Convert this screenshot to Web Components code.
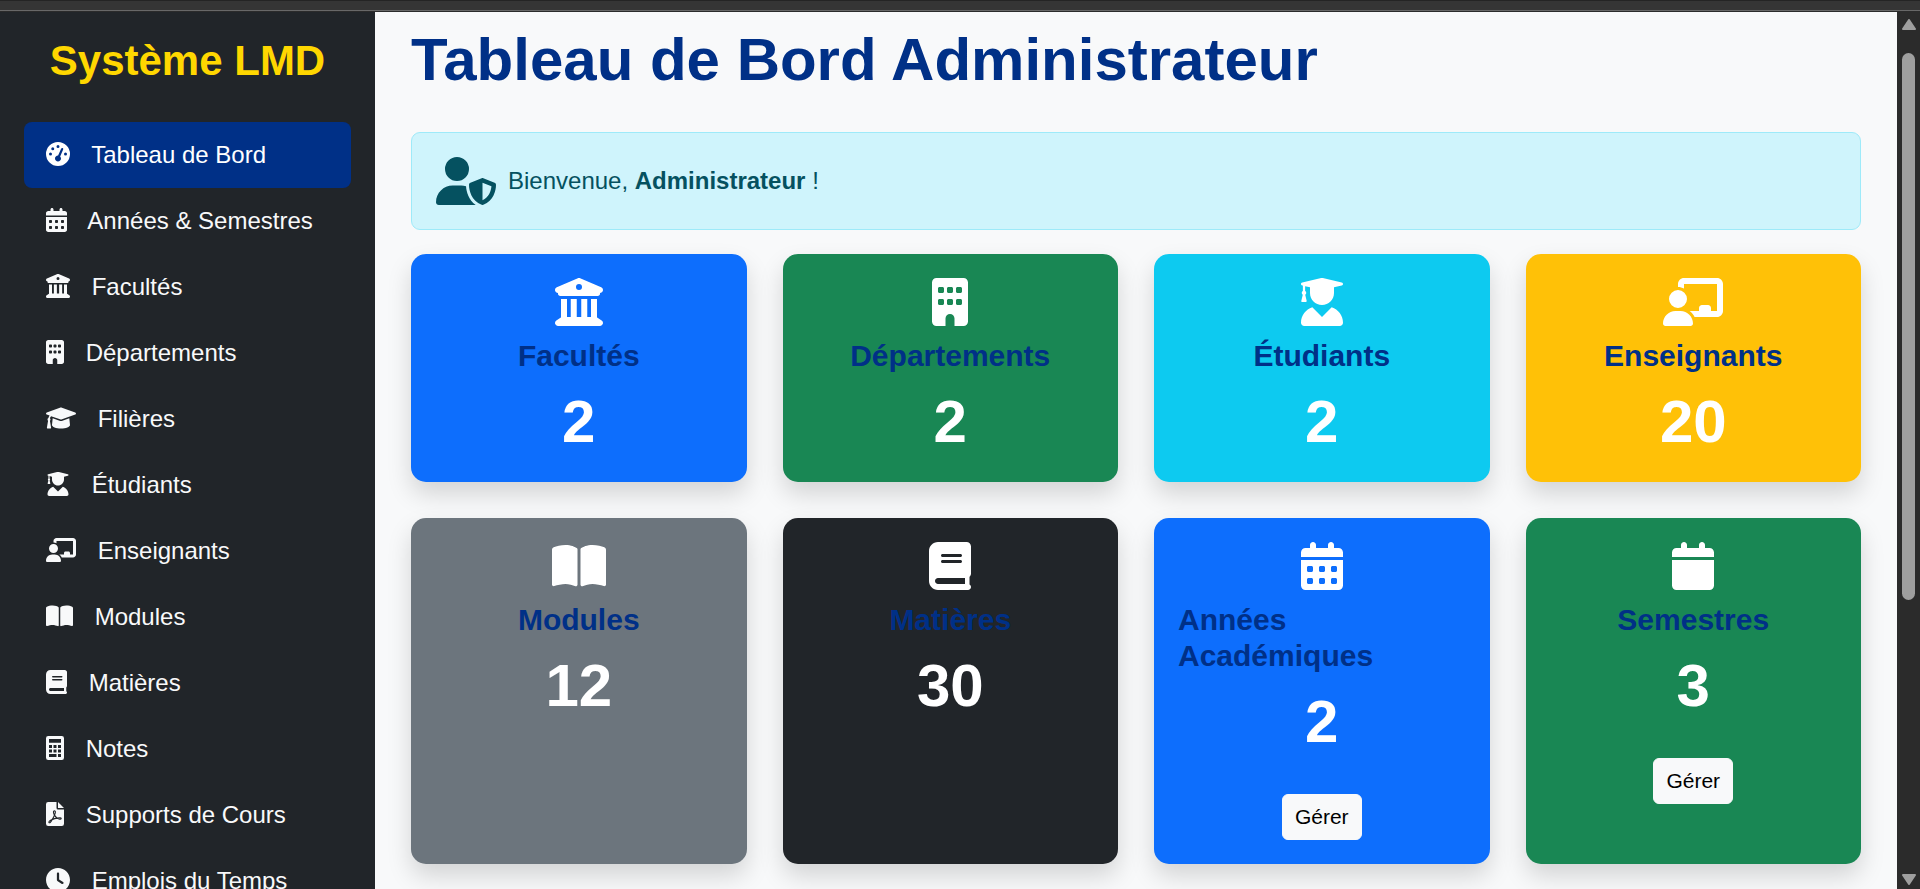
<!DOCTYPE html>
<html lang="fr">
<head>
<meta charset="utf-8">
<meta name="viewport" content="width=device-width, initial-scale=1">
<title>Tableau de Bord Administrateur</title>
<style>
  html, body { margin: 0; height: 100%; }
  body {
    overflow: hidden;
    background: #f8f9fa;
    color: #212529;
    font: 24px/36px "Liberation Sans", Arial, sans-serif;
    --navy: #003087;
    --dark: #212529;
  }
</style>
</head>
<body>
<app-shell>
  <side-bar slot="side" heading="Système LMD">
    <nav-item icon="gauge" active>Tableau de Bord</nav-item>
    <nav-item icon="calendar-days">Années &amp; Semestres</nav-item>
    <nav-item icon="university">Facultés</nav-item>
    <nav-item icon="building">Départements</nav-item>
    <nav-item icon="graduation-cap">Filières</nav-item>
    <nav-item icon="user-graduate">Étudiants</nav-item>
    <nav-item icon="teacher">Enseignants</nav-item>
    <nav-item icon="book-open">Modules</nav-item>
    <nav-item icon="book">Matières</nav-item>
    <nav-item icon="calculator">Notes</nav-item>
    <nav-item icon="file-pdf">Supports de Cours</nav-item>
    <nav-item icon="clock">Emplois du Temps</nav-item>
  </side-bar>

  <page-heading>Tableau de Bord Administrateur</page-heading>
  <welcome-alert icon="user-shield">Bienvenue, <strong>Administrateur</strong> !</welcome-alert>
  <card-grid>
    <stat-card icon="university" label="Facultés" value="2" tone="primary"></stat-card>
    <stat-card icon="building" label="Départements" value="2" tone="success"></stat-card>
    <stat-card icon="user-graduate" label="Étudiants" value="2" tone="info"></stat-card>
    <stat-card icon="teacher" label="Enseignants" value="20" tone="warning"></stat-card>
    <stat-card icon="book-open" label="Modules" value="12" tone="secondary"></stat-card>
    <stat-card icon="book" label="Matières" value="30" tone="dark"></stat-card>
    <stat-card icon="calendar-days" label="Années Académiques" value="2" tone="primary"><action-button>Gérer</action-button></stat-card>
    <stat-card icon="calendar" label="Semestres" value="3" tone="success"><action-button>Gérer</action-button></stat-card>
  </card-grid>

  <scroll-rail slot="rail"></scroll-rail>
</app-shell>

<script>
const CAL_TOP = 'M128 0c17.7 0 32 14.3 32 32V64H288V32c0-17.7 14.3-32 32-32s32 14.3 32 32V64h48c26.5 0 48 21.5 48 48v48H0V112C0 85.5 21.5 64 48 64H96V32c0-17.7 14.3-32 32-32zM0 192H448V464c0 26.5-21.5 48-48 48H48c-26.5 0-48-21.5-48-48V192z';
const ICONS = {
  'gauge': [512, '<path d="M0 256a256 256 0 1 1 512 0A256 256 0 1 1 0 256zM288 96a32 32 0 1 0 -64 0 32 32 0 1 0 64 0zM256 416c35.3 0 64-28.7 64-64c0-17.4-6.9-33.1-18.1-44.6L366 161.7c5.3-12.1-.2-26.3-12.3-31.6s-26.3 .2-31.6 12.3L257.9 288c-.6 0-1.3 0-1.9 0c-35.3 0-64 28.7-64 64s28.7 64 64 64zM176 144a32 32 0 1 0 -64 0 32 32 0 1 0 64 0zM96 288a32 32 0 1 0 0-64 32 32 0 1 0 0 64zm352-32a32 32 0 1 0 -64 0 32 32 0 1 0 64 0z"/>'],
  'calendar': [448, `<path d="${CAL_TOP}"/>`],
  'calendar-days': [448, `<path fill-rule="evenodd" d="${CAL_TOP}M64 272v32c0 8.8 7.2 16 16 16h32c8.8 0 16-7.2 16-16V272c0-8.8-7.2-16-16-16H80c-8.8 0-16 7.2-16 16zm128 0v32c0 8.8 7.2 16 16 16h32c8.8 0 16-7.2 16-16V272c0-8.8-7.2-16-16-16H208c-8.8 0-16 7.2-16 16zm144-16c-8.8 0-16 7.2-16 16v32c0 8.8 7.2 16 16 16h32c8.8 0 16-7.2 16-16V272c0-8.8-7.2-16-16-16H336zM64 400v32c0 8.8 7.2 16 16 16h32c8.8 0 16-7.2 16-16V400c0-8.8-7.2-16-16-16H80c-8.8 0-16 7.2-16 16zm144-16c-8.8 0-16 7.2-16 16v32c0 8.8 7.2 16 16 16h32c8.8 0 16-7.2 16-16V400c0-8.8-7.2-16-16-16H208zm112 16v32c0 8.8 7.2 16 16 16h32c8.8 0 16-7.2 16-16V400c0-8.8-7.2-16-16-16H336c-8.8 0-16 7.2-16 16z"/>`],
  'university': [512, '<path fill-rule="evenodd" d="M243.4 2.6l-224 96c-14 6-21.8 21-18.7 35.8S16.8 160 32 160v8c0 13.3 10.7 24 24 24H456c13.3 0 24-10.7 24-24v-8c15.2 0 28.3-10.7 31.3-25.6s-4.8-29.9-18.7-35.8l-224-96c-8-3.4-17.2-3.4-25.2 0zM128 224H64V420.3c-.6 .3-1.2 .7-1.8 1.1l-48 32c-11.7 7.8-17 22.4-12.9 35.9S17.9 512 32 512H480c14.1 0 26.5-9.2 30.6-22.7s-1.1-28.1-12.9-35.9l-48-32c-.6-.4-1.2-.7-1.8-1.1V224H384V416H344V224H280V416H232V224H168V416H128V224zM256 64a32 32 0 1 1 0 64 32 32 0 1 1 0-64z"/>'],
  'building': [384, '<path fill-rule="evenodd" d="M48 0C21.5 0 0 21.5 0 48V464c0 26.5 21.5 48 48 48h96V432c0-26.5 21.5-48 48-48s48 21.5 48 48v80h96c26.5 0 48-21.5 48-48V48c0-26.5-21.5-48-48-48H48zM64 240c0-8.8 7.2-16 16-16h32c8.8 0 16 7.2 16 16v32c0 8.8-7.2 16-16 16H80c-8.8 0-16-7.2-16-16V240zm112-16h32c8.8 0 16 7.2 16 16v32c0 8.8-7.2 16-16 16H176c-8.8 0-16-7.2-16-16V240c0-8.8 7.2-16 16-16zm80 16c0-8.8 7.2-16 16-16h32c8.8 0 16 7.2 16 16v32c0 8.8-7.2 16-16 16H272c-8.8 0-16-7.2-16-16V240zM80 96h32c8.8 0 16 7.2 16 16v32c0 8.8-7.2 16-16 16H80c-8.8 0-16-7.2-16-16V112c0-8.8 7.2-16 16-16zm80 16c0-8.8 7.2-16 16-16h32c8.8 0 16 7.2 16 16v32c0 8.8-7.2 16-16 16H176c-8.8 0-16-7.2-16-16V112zM272 96h32c8.8 0 16 7.2 16 16v32c0 8.8-7.2 16-16 16H272c-8.8 0-16-7.2-16-16V112c0-8.8 7.2-16 16-16z"/>'],
  'graduation-cap': [640, '<path d="M623.1 136.9l-282.7-101.2c-13.73-4.91-29.7-4.91-43.43 0L16.05 136.9C6.438 140.4 0 149.6 0 160s6.438 19.65 16.05 23.09L76.07 204.6c-11.89 15.8-20.26 34.16-24.55 53.95C40.05 263.4 32 274.8 32 288c0 9.953 4.814 18.49 11.94 24.36l-24.83 149C17.48 471.1 25 480 34.89 480H93.11c9.887 0 17.41-8.879 15.78-18.63l-24.83-149C91.19 306.5 96 297.1 96 288c0-10.29-5.174-19.03-12.72-24.89c4.252-17.76 12.88-33.82 24.94-47.03l190.6 68.23c13.73 4.91 29.7 4.91 43.43 0l281.7-101.2C633.6 179.6 640 170.4 640 160S633.6 140.4 623.1 136.9zM351.1 314.4C341.7 318.1 330.9 320 320 320c-10.92 0-21.69-1.867-32-5.555L142.8 262.5L128 405.3C128 446.6 213.1 480 320 480c105.1 0 192-33.4 192-74.67l-14.78-142.9L351.1 314.4z"/>'],
  'user-graduate': [512, '<path d="M45.63 79.75L52 81.25v58.5C45 143.9 40 151.3 40 160c0 8.375 4.625 15.38 11.12 19.75L35.5 242C33.75 248.9 37.63 256 43.13 256h41.75c5.5 0 9.375-7.125 7.625-13.1L76.88 179.8C83.38 175.4 88 168.4 88 160c0-8.75-5-16.12-12-20.25V87.13L128 99.63V160c0 70.75 57.25 128 128 128s128-57.25 128-128V99.62l82.25-19.87c18.25-4.375 18.25-27 0-31.5l-190.4-46c-13-3-26.62-3-39.63 0l-190.6 46C27.5 52.63 27.5 75.38 45.63 79.75zM359.2 312.8L256 416L152.8 312.8C82.87 335.1 32 400 32 477.3C32 496.5 47.53 512 66.67 512h378.7C464.5 512 480 496.5 480 477.3C480 400 429.1 335.1 359.2 312.8z"/>'],
  'teacher': [640, '<path d="M160 64c0-35.3 28.7-64 64-64H576c35.3 0 64 28.7 64 64V352c0 35.3-28.7 64-64 64H336.8c-11.8-25.5-29.9-47.5-52.4-64H384V320c0-17.7 14.3-32 32-32h64c17.7 0 32 14.3 32 32v32h64V64H224v49.1C205.2 102.2 183.3 96 160 96V64zm0 64a96 96 0 1 1 0 192 96 96 0 1 1 0-192zM133.3 352h53.3C260.3 352 320 411.7 320 485.3c0 14.7-11.9 26.7-26.7 26.7H26.7C11.9 512 0 500.1 0 485.3C0 411.7 59.7 352 133.3 352z"/>'],
  'book-open': [576, '<path d="M249.6 471.5c10.8 3.8 22.4-4.1 22.4-15.5V78.6c0-4.2-1.6-8.4-5-11C247.4 52 202.4 32 144 32C93.5 32 46.3 45.3 18.1 56.1C6.8 60.5 0 71.7 0 83.8V454.1c0 11.9 12.8 20.2 24.1 16.5C55.6 460.1 105.5 448 144 448c33.9 0 79 14 105.6 23.5zm76.8 0C353 462 398.1 448 432 448c38.5 0 88.4 12.1 119.9 22.6c11.3 3.8 24.1-4.6 24.1-16.5V83.8c0-12.1-6.8-23.3-18.1-27.6C529.7 45.3 482.5 32 432 32c-58.4 0-103.4 20-123 35.6c-3.3 2.6-5 6.8-5 11V456c0 11.4 11.7 19.3 22.4 15.5z"/>'],
  'book': [448, '<path fill-rule="evenodd" d="M448 336V48C448 21.49 426.5 0 400 0H96C42.98 0 0 42.98 0 96v320c0 53.02 42.98 96 96 96h320c17.67 0 32-14.33 32-32c0-11.72-6.607-21.52-16-27.1v-81.36C441.8 362.8 448 350.2 448 336zM144 128h192C344.8 128 352 135.2 352 144C352 152.8 344.8 160 336 160H144C135.2 160 128 152.8 128 144C128 135.2 135.2 128 144 128zM144 192h192C344.8 192 352 199.2 352 208C352 216.8 344.8 224 336 224H144C135.2 224 128 216.8 128 208C128 199.2 135.2 192 144 192zM384 448H96c-17.67 0-32-14.33-32-32c0-17.67 14.33-32 32-32h288V448z"/>'],
  'calculator': [384, '<path fill-rule="evenodd" d="M48 0H336a48 48 0 0 1 48 48V464a48 48 0 0 1-48 48H48a48 48 0 0 1-48-48V48A48 48 0 0 1 48 0zM64 64V144H320V64zM64 192v64h64v-64zM160 192v64h64v-64zM256 192v64h64v-64zM64 288v64h64v-64zM160 288v64h64v-64zM256 288v64h64v-64zM64 384v64h160v-64zM256 384v64h64v-64z"/>'],
  'file-pdf': [384, '<path d="M48 0H224V128a32 32 0 0 0 32 32H384V464a48 48 0 0 1-48 48H48a48 48 0 0 1-48-48V48A48 48 0 0 1 48 0zM256 0L384 128H256z"/><path fill="none" stroke="#212529" stroke-width="24" stroke-linejoin="round" d="M180 188c-30 0-24 56 0 92c22-36 30-92 0-92zM180 280c-14 40-30 70-50 96c40-18 72-26 112-32c-30-18-48-38-62-64zM130 376c-46 18-82 46-66 64c18 14 50-24 66-64zM242 344c30 24 76 34 82 10c2-20-40-20-82-10z"/>'],
  'clock': [512, '<path fill-rule="evenodd" d="M256 512C114.6 512 0 397.4 0 256S114.6 0 256 0s256 114.6 256 256S397.4 512 256 512zM232 256C232 264 236 271.5 242.7 275.1L338.7 339.1C349.7 347.3 364.6 344.3 371.1 333.3C379.3 322.3 376.3 307.4 365.3 300L280 243.2V120C280 106.7 269.3 96 256 96C242.7 96 232 106.7 232 120z"/>'],
  'user-shield': [640, '<path fill-rule="evenodd" d="M224 256A128 128 0 1 0 224 0a128 128 0 1 0 0 256zm-45.7 48C79.8 304 0 383.8 0 482.3C0 498.7 13.3 512 29.7 512H418.3c1.8 0 3.5-.2 5.3-.5c-76.3-55.1-99.8-141-103.1-200.2c-16.1-4.8-33.1-7.3-50.7-7.3H178.3zm308.8-78.3l-120 48C358 277.4 352 286.2 352 296c0 63.3 25.9 168.8 134.8 214.2c5.9 2.5 12.6 2.5 18.5 0C614.1 464.8 640 359.3 640 296c0-9.8-6-18.6-15.1-22.3l-120-48c-5.7-2.3-12.1-2.3-17.8 0zM591.4 312c-3.9 50.7-27.2 116.7-95.4 149.7V273.8L591.4 312z"/>']
};

/* Registers an element whose shadow root is filled from its own attributes. */
function define(name, render) {
  customElements.define(name, class extends HTMLElement {
    connectedCallback() {
      if (this.shadowRoot) return;
      this.attachShadow({ mode: 'open' }).innerHTML = render(key => this.getAttribute(key) || '', this);
    }
  });
}

define('ui-icon', get => {
  const [width, shape] = ICONS[get('name')];
  return `<style>
    :host { display: inline-block; line-height: 0; flex: none; }
    svg { display: block; height: 1em; width: calc(1em * ${width} / 512); fill: currentColor; }
  </style><svg viewBox="0 0 ${width} 512" aria-hidden="true">${shape}</svg>`;
});

define('app-shell', () => `<style>
    :host { display: flex; flex-direction: column; height: 100vh; overflow: hidden; }
    .chrome { flex: none; height: 9px; background: #353535; border-top: 1px solid #242424; border-bottom: 1px solid #686868; }
    .chrome-edge { flex: none; height: 1px; background: #2b2b2b; }
    .row { flex: 1; min-height: 0; display: flex; }
    main { flex: 1; min-width: 0; overflow: hidden; padding: 12px 36px; box-sizing: border-box; }
    slot[name] { display: contents; }
  </style>
  <div class="chrome"></div><div class="chrome-edge"></div>
  <div class="row"><slot name="side"></slot><main><slot></slot></main><slot name="rail"></slot></div>`);

define('side-bar', get => `<style>
    :host { display: block; flex: none; width: 375px; box-sizing: border-box; padding: 24px; overflow: hidden; background: var(--dark); color: #fff; }
    h2 { margin: 0 0 36px; font-size: 42px; line-height: 50px; font-weight: 700; text-align: center; color: #ffd700; }
    nav { display: flex; flex-direction: column; }
  </style><h2>${get('heading')}</h2><nav><slot></slot></nav>`);

define('nav-item', (get, host) => `<style>
    :host { display: block; }
    a { display: block; padding: 15px 22px; border-radius: 8px; color: #f8f9fa; text-decoration: none; white-space: nowrap; }
    :host([active]) a { background: var(--navy); color: #fff; }
    ui-icon { margin-right: 15px; vertical-align: -3px; }
  </style><a href="#"${host.hasAttribute('active') ? ' aria-current="page"' : ''}><ui-icon name="${get('icon')}"></ui-icon> <slot></slot></a>`);

define('page-heading', () => `<style>
    :host { display: block; margin-bottom: 36px; }
    h1 { margin: 0; font-size: 60px; line-height: 72px; font-weight: 700; color: var(--navy); }
  </style><h1><slot></slot></h1>`);

define('welcome-alert', get => `<style>
    :host { display: flex; align-items: center; gap: 12px; margin-bottom: 24px; padding: 24px; border: 1px solid #9eeaf9; border-radius: 9px; background: #cff4fc; color: #055160; }
    ui-icon { font-size: 48px; }
  </style><ui-icon name="${get('icon')}"></ui-icon><div role="status"><slot></slot></div>`);

define('card-grid', () => `<style>
    :host { display: grid; grid-template-columns: repeat(4, minmax(0, 1fr)); gap: 36px; }
  </style><slot></slot>`);

define('stat-card', get => `<style>
    :host { display: flex; flex-direction: column; align-items: center; padding: 24px; border-radius: 15px; color: #fff; box-shadow: 0 12px 24px rgba(0, 0, 0, .15); }
    :host([tone="primary"]) { background: #0d6efd; }
    :host([tone="success"]) { background: #198754; }
    :host([tone="info"]) { background: #0dcaf0; }
    :host([tone="warning"]) { background: #ffc107; }
    :host([tone="secondary"]) { background: #6c757d; }
    :host([tone="dark"]) { background: #212529; }
    ui-icon { font-size: 48px; }
    h2 { margin: 12px 0; font-size: 30px; line-height: 36px; font-weight: 700; color: var(--navy); }
    p { margin: 0; font-size: 60px; line-height: 72px; font-weight: 700; }
  </style><ui-icon name="${get('icon')}"></ui-icon><h2>${get('label')}</h2><p>${get('value')}</p><slot></slot>`);

define('action-button', () => `<style>
    :host { display: block; margin-top: 36px; }
    button { display: block; margin: 0; padding: 6px 12px; border: 1px solid #f8f9fa; border-radius: 6px; background: #f8f9fa; color: #000; font: inherit; font-size: 21px; line-height: 32px; cursor: pointer; }
  </style><button type="button"><slot></slot></button>`);

define('scroll-rail', () => `<style>
    :host { display: flex; flex-direction: column; align-items: center; flex: none; width: 23px; box-sizing: border-box; padding: 7px 0 4px; background: #2b2b2b; }
    svg { display: block; flex: none; width: 14px; height: 11px; fill: #9f9f9f; stroke: #9f9f9f; stroke-width: 2; stroke-linejoin: round; }
    .track { flex: 1; width: 13px; padding: 23px 0; display: flex; flex-direction: column; }
    .thumb { flex: 24; border-radius: 7px; background: #9f9f9f; }
    .rest { flex: 11; }
  </style>
  <svg viewBox="0 0 14 11"><path d="M7 1L13 10H1z"/></svg>
  <div class="track"><div class="thumb"></div><div class="rest"></div></div>
  <svg viewBox="0 0 14 11"><path d="M1 1H13L7 10z"/></svg>`);
</script>
</body>
</html>
